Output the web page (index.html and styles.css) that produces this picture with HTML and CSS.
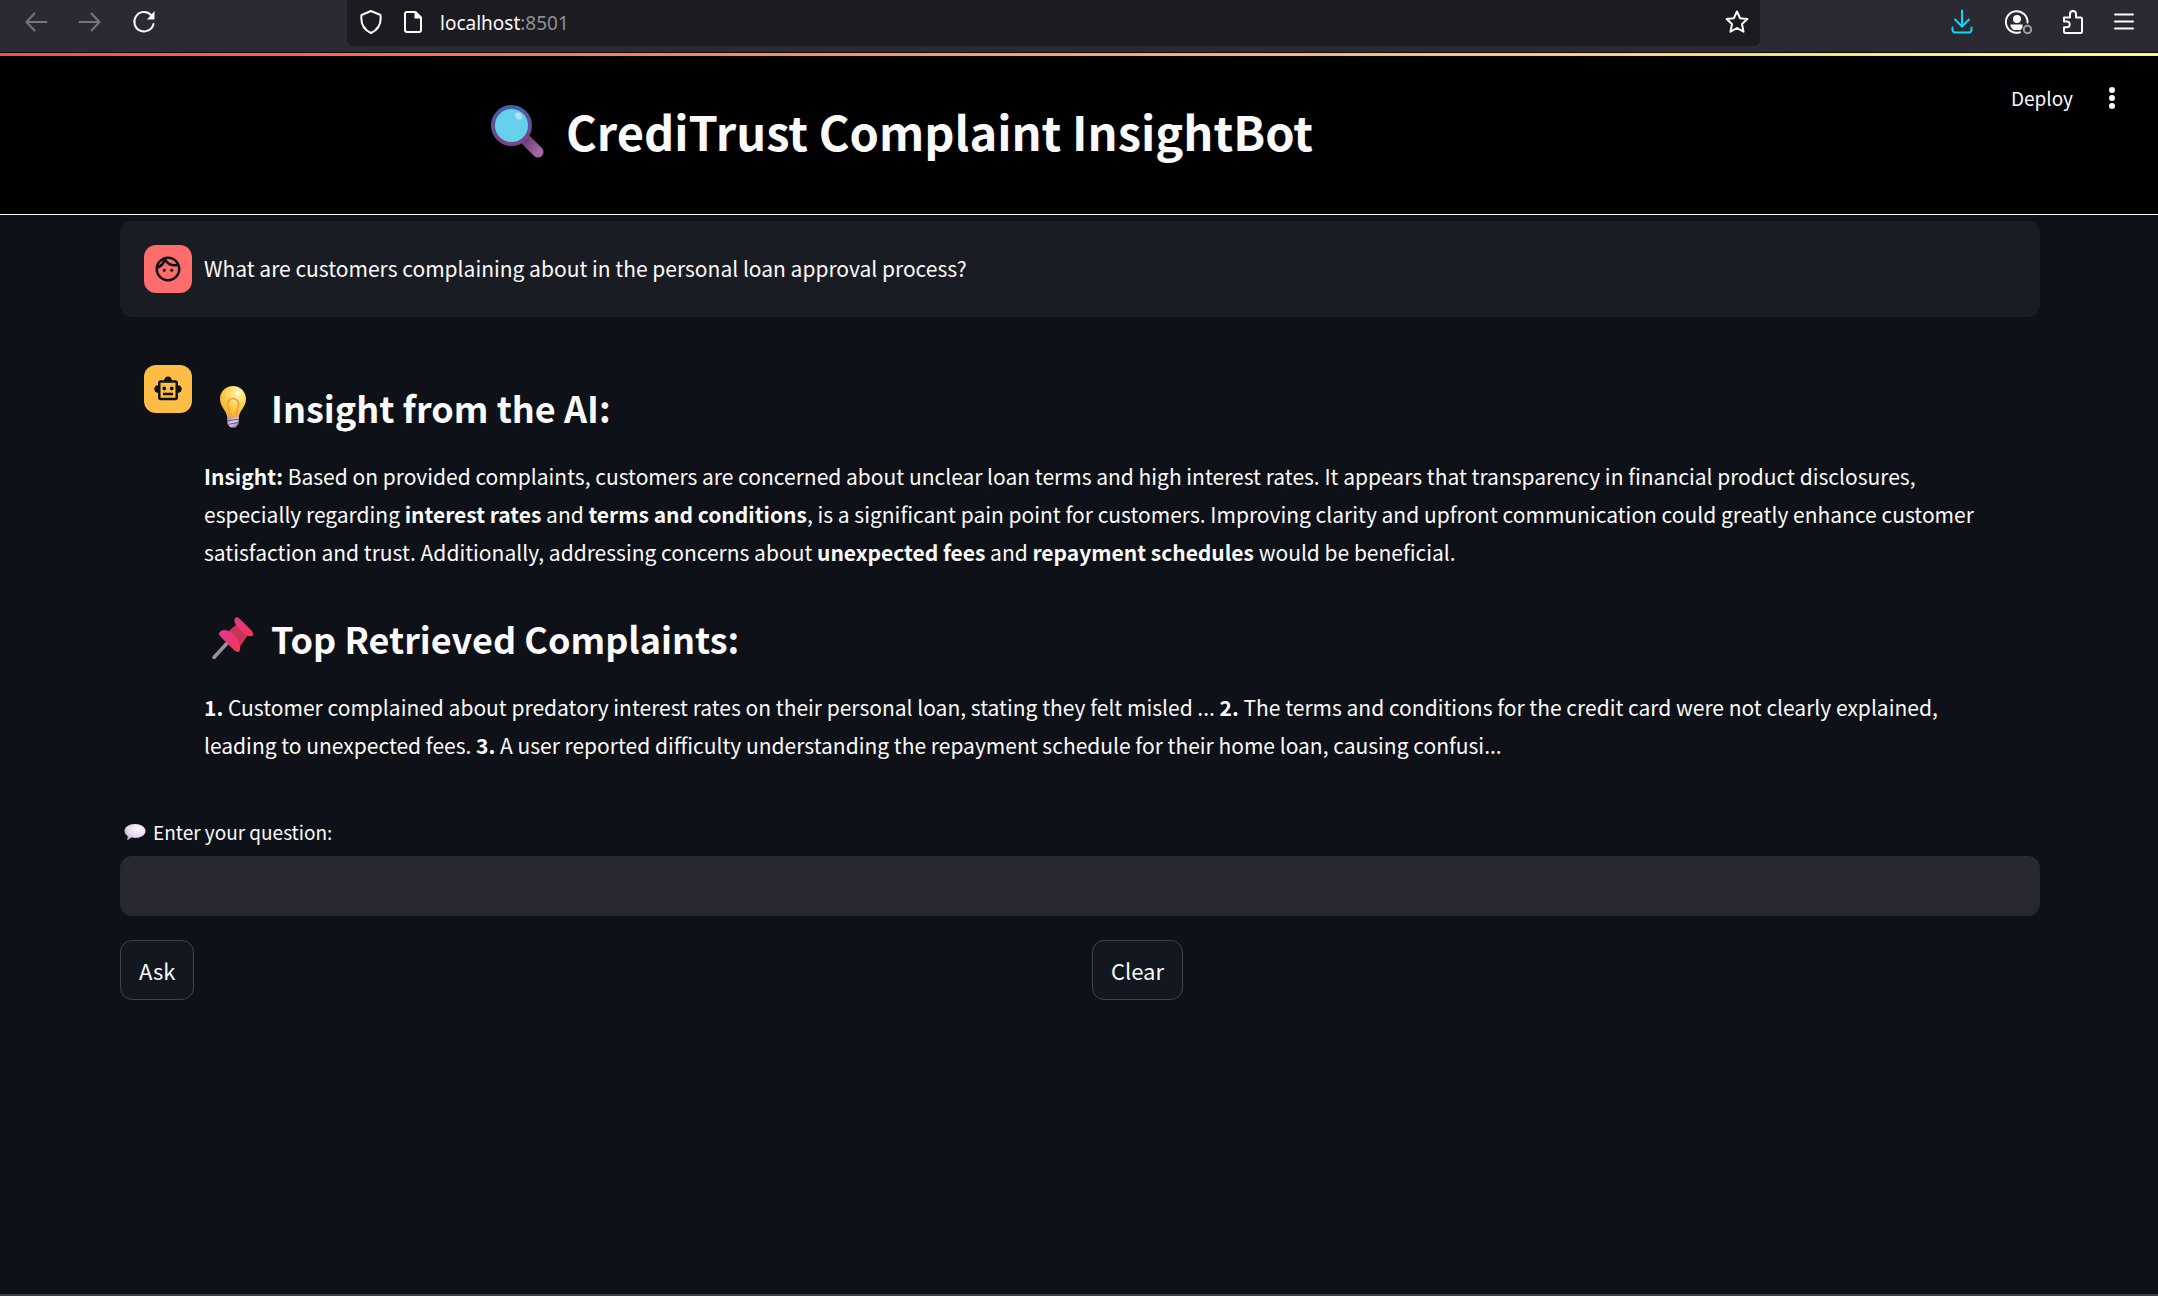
FILE: index.html
```html
<!DOCTYPE html>
<html lang="en">
<head>
<meta charset="utf-8">
<title>CrediTrust Complaint InsightBot</title>
<link rel="stylesheet" href="styles.css">
</head>
<body>
<nav class="browser-bar" aria-label="Browser">
  <div class="nav-buttons">
    <button class="icon-btn dim" aria-label="Back"><svg width="24" height="24" viewBox="0 0 24 24"><path d="M22.500 12H3M10.500 3.500 2.500 12l8 8.500"/></svg></button>
    <button class="icon-btn dim" aria-label="Forward"><svg width="24" height="24" viewBox="0 0 24 24"><path d="M1.500 12H21M13.500 3.500l8 8.500-8 8.500"/></svg></button>
    <button class="icon-btn" aria-label="Reload"><svg width="24" height="24" viewBox="0 0 24 24"><path d="M21.500 14A9.700 9.700 0 1 1 19 5"/><path class="solid" d="M22.500 1v8.500h-7.500z"/></svg></button>
  </div>
  <div class="url-box">
    <svg width="24" height="26" viewBox="0 0 24 26"><path d="M12 2 21.500 6c1 8-2 14.500-9.500 18C4.500 20.500 1.500 14 2.500 6z"/></svg>
    <svg class="page-icon" width="20" height="24" viewBox="0 0 20 24"><path d="M4 2h8.500L18 7.500V20a2 2 0 0 1-2 2H4a2 2 0 0 1-2-2V4a2 2 0 0 1 2-2z"/><path class="solid" d="M11.500 1v7.500H19z"/></svg>
    <span class="url">localhost<span class="port">:8501</span></span>
    <svg class="star" width="26" height="26" viewBox="0 0 26 26"><path d="M13 2.500l3.100 6.700 7.300.9-5.400 5 1.500 7.600-6.500-3.700-6.500 3.700L8 15.100l-5.400-5 7.300-.9z"/></svg>
  </div>
  <div class="tools">
    <button class="icon-btn download" aria-label="Downloads"><svg width="24" height="26" viewBox="0 0 24 26"><path d="M12 1.500V17M5 10.500l7 7 7-7M2.500 18.500V21a2.500 2.500 0 0 0 2.500 2.500h14a2.500 2.500 0 0 0 2.500-2.500v-2.500"/></svg></button>
    <button class="icon-btn" aria-label="Account"><svg width="28" height="26" viewBox="0 0 28 26"><path d="M23.500 13.500A10.800 10.800 0 1 0 16 23.300"/><circle class="solid" cx="13" cy="10" r="4"/><path class="solid" d="M6.500 15.500h12v3a7 7 0 0 1-2 2.500h-7a8 8 0 0 1-3-4z"/><circle class="grey" cx="23.500" cy="20.500" r="3.700"/></svg></button>
    <button class="icon-btn" aria-label="Extensions"><svg width="22" height="26" viewBox="0 0 22 26"><path d="M2 8.500h6V5a3 3 0 0 1 6 0v3.500h4.500A1.500 1.500 0 0 1 20 10v12.500a1.500 1.500 0 0 1-1.500 1.500h-15A1.500 1.500 0 0 1 2 22.500v-4.300h2.800a2.900 2.900 0 0 0 0-5.800H2z"/></svg></button>
    <button class="icon-btn" aria-label="Menu"><svg width="20" height="24" viewBox="0 0 20 24"><path d="M1 4.500h18M1 11.500h18M1 18.500h18"/></svg></button>
  </div>
</nav>
<header class="app-header">
  <h1 class="title">
    <svg width="54" height="54" viewBox="0 0 54 54">
      <defs>
        <linearGradient id="rim" x1="0" y1="0" x2="0" y2="1"><stop offset="0" stop-color="#4660a5"/><stop offset="1" stop-color="#7c4384"/></linearGradient>
        <linearGradient id="grip" x1="0" y1="0" x2="1" y2="1"><stop offset="0" stop-color="#6d3f7c"/><stop offset="1" stop-color="#a3679f"/></linearGradient>
      </defs>
      <path d="M36 36l12 12" stroke="url(#grip)" stroke-width="11" stroke-linecap="round"/>
      <path d="M32 31l6 6" stroke="#6d3f7c" stroke-width="5"/>
      <circle cx="21.500" cy="21.500" r="18.500" fill="#65d0ec" stroke="url(#rim)" stroke-width="4"/>
      <ellipse cx="28.500" cy="12" rx="3" ry="4" fill="#b5dcf5" transform="rotate(-35 28.500 12)"/>
    </svg>
    <span>CrediTrust Complaint InsightBot</span>
  </h1>
  <div class="header-tools">
    <button class="deploy">Deploy</button>
    <button class="icon-btn" aria-label="More options"><svg width="8" height="24" viewBox="0 0 8 24"><g class="solid"><circle cx="4" cy="4" r="3"/><circle cx="4" cy="12" r="3"/><circle cx="4" cy="20" r="3"/></g></svg></button>
  </div>
</header>
<main class="main">
  <section class="message user">
    <div class="avatar red"><svg width="30" height="30" viewBox="0 0 24 24"><path fill="#0e1117" d="M10.250 13c0 .69-.56 1.250-1.250 1.250S7.750 13.690 7.750 13 8.310 11.750 9 11.750s1.250.56 1.250 1.250zM15 11.750c-.69 0-1.250.56-1.250 1.250s.56 1.250 1.250 1.250 1.250-.56 1.250-1.250-.56-1.250-1.250-1.250zM22 12c0 5.520-4.480 10-10 10S2 17.520 2 12 6.480 2 12 2s10 4.480 10 10zM10.660 4.120C12.060 6.440 14.600 8 17.500 8c.46 0 .91-.05 1.340-.12C17.440 5.560 14.900 4 12 4c-.46 0-.91.05-1.340.12zM4.420 9.470a8.050 8.050 0 0 0 3.660-4.440 8.050 8.050 0 0 0-3.660 4.440zM20 12c0-.78-.12-1.530-.33-2.240-.7.150-1.420.24-2.170.24a10 10 0 0 1-7.760-3.690A10.020 10.020 0 0 1 4 11.860c.01.040 0 .09 0 .14 0 4.410 3.590 8 8 8s8-3.590 8-8z"/></svg></div>
    <p class="text">What are customers complaining about in the personal loan approval process?</p>
  </section>
  <section class="message">
    <div class="avatar amber"><svg width="30" height="30" viewBox="0 0 24 24"><path fill="#0e1117" d="M20 9V7c0-1.100-.9-2-2-2h-3c0-1.660-1.340-3-3-3S9 3.340 9 5H6c-1.100 0-2 .9-2 2v2c-1.660 0-3 1.340-3 3s1.340 3 3 3v4c0 1.100.9 2 2 2h12c1.100 0 2-.9 2-2v-4c1.660 0 3-1.340 3-3s-1.340-3-3-3zm-2 10H6V7h12v12zm-9-6c-.83 0-1.500-.67-1.500-1.500S8.170 10 9 10s1.500.67 1.500 1.500S9.830 13 9 13zm7.500-1.500c0 .83-.67 1.500-1.500 1.500s-1.500-.67-1.500-1.500.67-1.500 1.500-1.500 1.500.67 1.500 1.500zM8 15h8v2H8v-2z"/></svg></div>
    <div class="answer">
      <h3 class="heading">
        <svg width="42" height="42" viewBox="0 0 42 42">
          <defs>
            <radialGradient id="glass" cx=".68" cy=".22" r=".8"><stop offset="0" stop-color="#fffbe8"/><stop offset=".2" stop-color="#ffe98c"/><stop offset=".7" stop-color="#fdc63c"/><stop offset="1" stop-color="#f5a93c"/></radialGradient>
            <linearGradient id="cap" x1="0" y1="0" x2="1" y2="1"><stop offset="0" stop-color="#9c8bb0"/><stop offset=".5" stop-color="#d9cde2"/><stop offset="1" stop-color="#7c5f98"/></linearGradient>
          </defs>
          <path d="M21 0c7.500 0 13 5.800 13 13 0 8-6 10-7.500 19h-11C14 23 8 21 8 13 8 5.800 13.500 0 21 0z" fill="url(#glass)"/>
          <path d="M18 31c0-7-2.500-9-2.500-13a5.500 5.500 0 0 1 11 0c0 4-2.500 6-2.500 13" fill="none" stroke="#f79a3b" stroke-width="1.500"/>
          <path d="M15 31h12l-.5 7-3 3.500h-5L15.500 38z" fill="url(#cap)"/>
          <path d="M15 35l12-2M15.500 38.500l11-2" stroke="#71558d" stroke-width="1"/>
        </svg>
        <span>Insight from the AI:</span>
      </h3>
      <p class="text"><strong>Insight:</strong> Based on provided complaints, customers are concerned about unclear loan terms and high interest rates. It appears that transparency in financial product disclosures, especially regarding <strong>interest rates</strong> and <strong>terms and conditions</strong>, is a significant pain point for customers. Improving clarity and upfront communication could greatly enhance customer satisfaction and trust. Additionally, addressing concerns about <strong>unexpected fees</strong> and <strong>repayment schedules</strong> would be beneficial.</p>
      <h3 class="heading">
        <svg width="42" height="42" viewBox="0 0 42 42">
          <defs><linearGradient id="pin" x1="0" y1="0" x2="1" y2="1"><stop offset="0" stop-color="#d93a91"/><stop offset="1" stop-color="#ff3355"/></linearGradient></defs>
          <path d="M2 40.500 17 24" stroke="#9a8fa6" stroke-width="3.500" stroke-linecap="round"/>
          <path d="M13 17 25 7l11 11-9 13z" fill="#c93358"/>
          <path d="M9 14c3-2 8-1 13 4s7 11 6 15c-1 3-4 2-6 0L8 19c-2-2-1-4 1-5z" fill="url(#pin)"/>
          <path d="M23 1c2-2 4 0 8 4l8 8c2 2 3 5 1 6-3 1-7-1-11-5s-8-9-6-13z" fill="url(#pin)"/>
        </svg>
        <span>Top Retrieved Complaints:</span>
      </h3>
      <p class="text"><strong>1.</strong> Customer complained about predatory interest rates on their personal loan, stating they felt misled ... <strong>2.</strong> The terms and conditions for the credit card were not clearly explained, leading to unexpected fees. <strong>3.</strong> A user reported difficulty understanding the repayment schedule for their home loan, causing confusi...</p>
    </div>
  </section>
  <form class="ask-form">
    <label class="label" for="question">
      <svg width="22" height="18" viewBox="0 0 22 18">
        <defs><radialGradient id="bubble" cx=".65" cy=".3" r=".8"><stop offset="0" stop-color="#fbf7fc"/><stop offset=".6" stop-color="#e6daef"/><stop offset="1" stop-color="#b7a3cf"/></radialGradient></defs>
        <path d="M11 1c6 0 10.500 3.200 10.500 7S17 15 11 15c-2 0-3-.2-4-.4L4 17c-.6.3-1 0-.8-.6l.7-3C2 12 .5 10.200.5 8 .5 4.200 5 1 11 1z" fill="url(#bubble)"/>
      </svg>
      <span>Enter your question:</span>
    </label>
    <input class="question" id="question" type="text">
    <div class="actions">
      <div><button class="btn" type="button">Ask</button></div>
      <div><button class="btn" type="button">Clear</button></div>
    </div>
  </form>
</main>
</body>
</html>
```
FILE: styles.css
```css
* { box-sizing: border-box; }

body {
  display: flex;
  flex-direction: column;
  min-height: 100vh;
  margin: 0;
  background: #0e1117;
  border-bottom: 2px solid #3f3d45;
  color: #fafafa;
  font-family: "Noto Sans CJK SC", sans-serif;
  font-size: 21px;
  line-height: 38px;
}

h1, h3, p { margin: 0; }

button {
  padding: 0;
  border: 0;
  background: none;
  color: inherit;
  font: inherit;
}

svg { display: block; flex: none; }

/* Browser toolbar */
.browser-bar {
  display: grid;
  grid-template-columns: 347px 1fr 398px;
  height: 53px;
  background: #2b2a33;
  border-bottom: 1px solid #0c0c0d;
}

.browser-bar svg {
  fill: none;
  stroke: #fbfbfe;
  stroke-width: 2;
  stroke-linecap: round;
  stroke-linejoin: round;
}

.browser-bar .solid { fill: #fbfbfe; stroke: none; }
.browser-bar .grey { stroke: #a0a0a6; }
.browser-bar .dim svg { stroke: #75747b; }
.browser-bar .download svg { stroke: #00ddff; }

.nav-buttons {
  display: flex;
  align-items: center;
  gap: 30px;
  height: 44px;
  padding-left: 24px;
}

.url-box {
  display: flex;
  align-items: center;
  height: 46px;
  padding: 0 10px 2px 12px;
  background: #1c1b22;
  border-radius: 0 0 6px 6px;
}

.page-icon { margin-left: 20px; }

.url {
  flex: 1;
  margin-left: 17px;
  padding-top: 2px;
  font-family: "Noto Sans", sans-serif;
  font-size: 19px;
}

.port { color: #8f8f96; }

.tools {
  display: flex;
  align-items: center;
  justify-content: space-between;
  height: 44px;
  padding: 0 24px 0 190px;
}

/* App header */
.app-header {
  display: flex;
  justify-content: space-between;
  align-items: flex-start;
  height: 162px;
  padding: 0 42px 0 490px;
  background: linear-gradient(90deg, #ff4b4b, #fffd80) top / 100% 3px no-repeat #000;
  border-bottom: 1px solid #fafafa;
}

.title {
  display: flex;
  align-items: center;
  gap: 22px;
  padding-top: 45px;
  font-size: 47px;
  font-weight: 700;
  line-height: 66px;
}

.header-tools {
  display: flex;
  align-items: center;
  gap: 35px;
  padding-top: 26px;
}

.header-tools .solid { fill: #fafafa; }
.deploy { font-size: 19px; }

/* Conversation */
.main { padding: 6px 118px 0 120px; }

.message {
  display: flex;
  gap: 12px;
  margin-bottom: 24px;
  padding: 24px;
  border-radius: 12px;
}

.user { background: #1a1c24; }
.user .text { padding-top: 4px; }

.avatar {
  display: grid;
  flex: none;
  place-items: center;
  width: 48px;
  height: 48px;
  border-radius: 12px;
}

.red { background: #ff6c6c; }
.amber { background: #ffbd45; }

.answer {
  min-width: 0;
  padding-right: 10px;
}

.heading {
  display: flex;
  align-items: center;
  gap: 17px;
  padding: 17px 0 25px 8px;
  font-size: 36px;
  font-weight: 700;
  line-height: 50px;
}

.answer .text + .heading { padding-top: 42px; }

/* Question form */
.ask-form { padding-top: 2px; }

.label {
  display: flex;
  align-items: center;
  gap: 7px;
  padding-left: 4px;
  font-size: 19px;
  line-height: 36px;
}

.question {
  display: block;
  width: 100%;
  height: 60px;
  margin-top: 6px;
  padding: 0 18px;
  border: 0;
  border-radius: 12px;
  background: #262730;
  color: inherit;
  font: inherit;
}

.actions {
  display: grid;
  grid-template-columns: 1fr 1fr;
  gap: 24px;
  margin-top: 24px;
}

.btn {
  height: 60px;
  padding: 0 18px;
  border: 1px solid #41434a;
  border-radius: 12px;
  background: #131720;
  font-size: 22px;
}
```
